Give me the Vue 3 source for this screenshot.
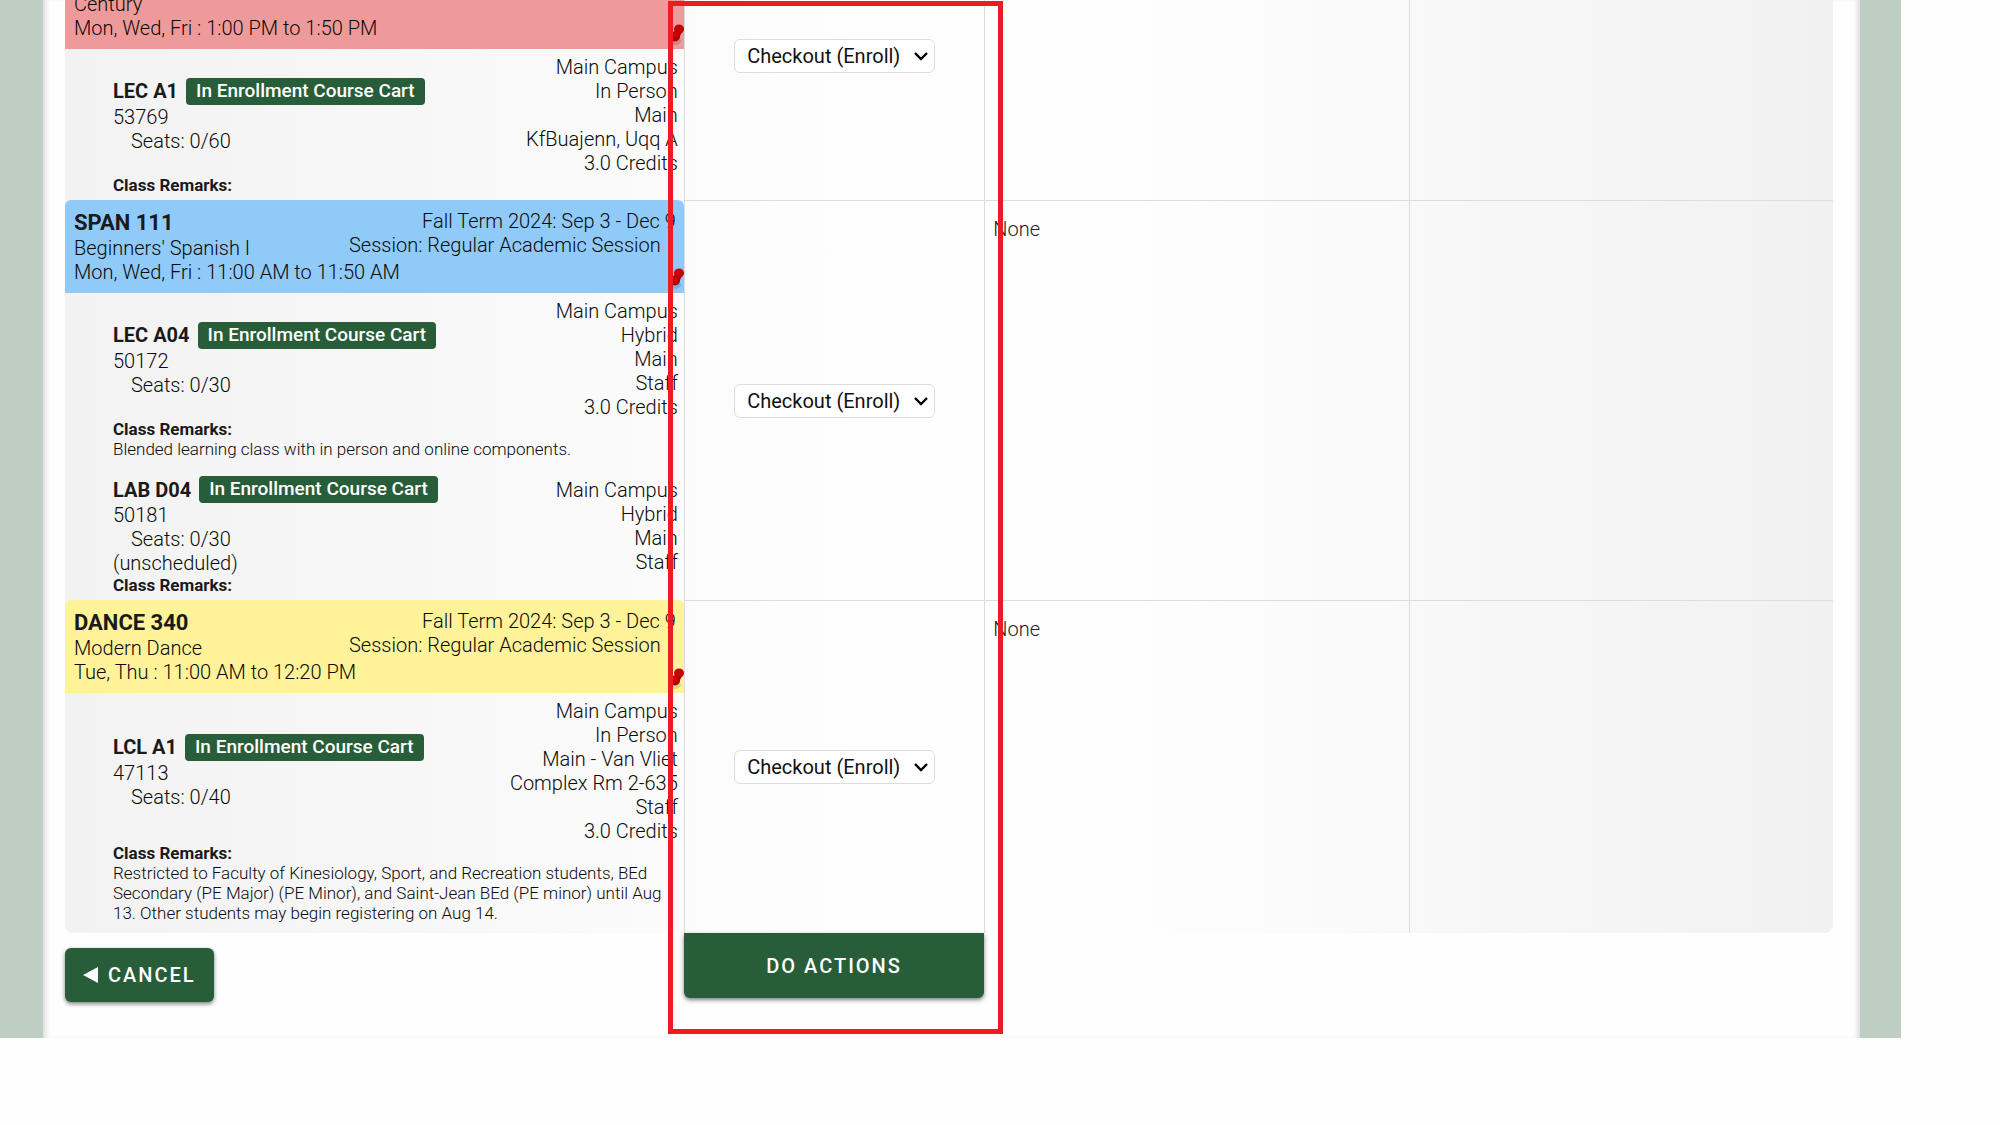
<script setup>
import { ref } from 'vue';

const term = 'Fall Term 2024: Sep 3 - Dec 9';
const session = 'Session: Regular Academic Session';

const courses = ref([
  {
    id: 'first',
    color: 'red',
    title: 'Century',
    times: 'Mon, Wed, Fri : 1:00 PM to 1:50 PM',
    action: 'enroll',
    sections: [
      {
        name: 'LEC A1',
        number: '53769',
        seats: '0/60',
        details: ['Main Campus', 'In Person', 'Main', 'KfBuajenn, Uqq A', '3.0 Credits'],
      },
    ],
  },
  {
    id: 'span111',
    color: 'blue',
    code: 'SPAN 111',
    title: "Beginners' Spanish I",
    times: 'Mon, Wed, Fri : 11:00 AM to 11:50 AM',
    action: 'enroll',
    messages: 'None',
    sections: [
      {
        name: 'LEC A04',
        number: '50172',
        seats: '0/30',
        details: ['Main Campus', 'Hybrid', 'Main', 'Staff', '3.0 Credits'],
        remarks: 'Blended learning class with in person and online components.',
      },
      {
        name: 'LAB D04',
        number: '50181',
        seats: '0/30',
        unscheduled: true,
        details: ['Main Campus', 'Hybrid', 'Main', 'Staff'],
      },
    ],
  },
  {
    id: 'dance340',
    color: 'yellow',
    code: 'DANCE 340',
    title: 'Modern Dance',
    times: 'Tue, Thu : 11:00 AM to 12:20 PM',
    action: 'enroll',
    messages: 'None',
    sections: [
      {
        name: 'LCL A1',
        number: '47113',
        seats: '0/40',
        details: ['Main Campus', 'In Person', 'Main - Van Vliet', 'Complex Rm 2-635', 'Staff', '3.0 Credits'],
        remarks:
          'Restricted to Faculty of Kinesiology, Sport, and Recreation students, BEd Secondary (PE Major) (PE Minor), and Saint-Jean BEd (PE minor) until Aug 13. Other students may begin registering on Aug 14.',
      },
    ],
  },
]);
</script>

<template>
  <div class="shell">
    <main class="page">
      <table class="cart-table">
        <colgroup>
          <col class="col-course" />
          <col class="col-action" />
          <col class="col-info" />
          <col class="col-info" />
        </colgroup>
        <tbody>
          <tr v-for="course in courses" :key="course.id">
            <td class="course-cell">
              <div class="course-header" :class="[course.color, { continued: !course.code }]">
                <div class="course-top">
                  <div>
                    <h2 v-if="course.code">{{ course.code }}</h2>
                    <div>{{ course.title }}</div>
                  </div>
                  <div v-if="course.code" class="term">
                    <div>{{ term }}</div>
                    <div class="session">{{ session }}</div>
                  </div>
                </div>
                <div>{{ course.times }}</div>
                <svg class="pin" width="16" height="24" viewBox="0 0 16 24" aria-hidden="true">
                  <ellipse cx="7" cy="18" rx="6" ry="4" fill="#000" opacity="0.12" />
                  <path d="M6 9 L9 5 L14 9 L11 15 Z" fill="#a80000" />
                  <ellipse cx="11" cy="6" rx="5" ry="4.5" fill="#c40000" />
                  <ellipse cx="7" cy="13.5" rx="5" ry="5" fill="#b30000" />
                  <ellipse cx="7" cy="12" rx="3" ry="2" fill="#d40000" />
                </svg>
              </div>
              <div v-for="section in course.sections" :key="section.name" class="section">
                <div class="section-body">
                  <div>
                    <div class="section-name">
                      <strong>{{ section.name }}</strong>
                      <span class="badge">In Enrollment Course Cart</span>
                    </div>
                    <div>{{ section.number }}</div>
                    <div class="seats">Seats: {{ section.seats }}</div>
                    <div v-if="section.unscheduled">(unscheduled)</div>
                  </div>
                  <div class="details">
                    <div v-for="line in section.details" :key="line">{{ line }}</div>
                  </div>
                </div>
                <div class="remarks">
                  <strong>Class Remarks:</strong>
                  <p v-if="section.remarks">{{ section.remarks }}</p>
                </div>
              </div>
            </td>
            <td class="action-cell">
              <div class="action-field">
                <select v-model="course.action" class="action-select" :aria-label="course.title">
                  <option value="enroll">Checkout (Enroll)</option>
                </select>
                <svg class="chevron" width="14" height="10" viewBox="0 0 14 10" aria-hidden="true">
                  <path d="M1 2 L7 8 L13 2" fill="none" stroke="#000" stroke-width="2.4" />
                </svg>
              </div>
            </td>
            <td class="info-cell">{{ course.messages }}</td>
            <td class="info-cell"></td>
          </tr>
        </tbody>
      </table>
      <div class="buttons">
        <button type="button" class="btn cancel">
          <svg width="15" height="16" viewBox="0 0 15 16" aria-hidden="true">
            <path d="M0 8 L15 0 V16 Z" fill="#fff" />
          </svg>
          CANCEL
        </button>
        <button type="button" class="btn do-actions">DO ACTIONS</button>
      </div>
      <div class="highlight"></div>
    </main>
  </div>
</template>

<style>
body {
  background: #fefefe;
}
</style>

<style scoped>
.shell {
  margin-right: 99px;
  padding: 0 41px 0 43px;
  background: #bfcec3;
  overflow: hidden;
  font-family: Roboto, "Liberation Sans", sans-serif;
  font-size: 20px;
  font-weight: 300;
  line-height: 24px;
  color: #0a0a0a;
}

.page {
  display: flow-root;
  position: relative;
  padding: 0 27px 36px 22px;
  background: #fefefe;
  box-shadow: inset 6px 0 5px -3px #ddd, inset -6px 0 5px -3px #ddd;
}

/* the list is scrolled past the first course heading */
.cart-table {
  width: 100%;
  margin-top: -88px;
  table-layout: fixed;
  border-collapse: separate;
  border-spacing: 0;
  background: linear-gradient(90deg, #f2f2f2, #fefefe 45%, #fefefe 60%, #f1f1f1);
  border-radius: 0 0 8px 8px;
}

.col-course {
  width: 35%;
}

.col-action {
  width: 17%;
}

.col-info {
  width: 24%;
}

td {
  padding: 0;
  border-left: 1px solid #ddd;
  vertical-align: top;
}

td.course-cell {
  border-left: none;
}

tr + tr td:not(.course-cell) {
  border-top: 1px solid #ddd;
}

.course-header {
  position: relative;
  padding: 9px 8px 9px 9px;
  border-radius: 6px 6px 0 0;
}

.course-header.continued {
  padding-top: 80px;
}

.course-top {
  display: flex;
  justify-content: space-between;
}

.red {
  background: #ef9a9a;
}

.blue {
  background: #90caf9;
}

.yellow {
  background: #fff399;
}

h2 {
  margin: 0;
  color: #1a1a1a;
  font-size: 22px;
  font-weight: 700;
  line-height: 27px;
}

.term {
  text-align: right;
}

.session {
  padding-right: 15px;
}

.pin {
  position: absolute;
  right: 0;
  bottom: 2px;
}

.section {
  padding: 6px 6px 5px 48px;
}

.section + .section {
  margin-top: 1px;
}

.section-body {
  display: flex;
  align-items: center;
  justify-content: space-between;
}

.section-name {
  display: flex;
  align-items: center;
  gap: 8px;
  height: 27px;
}

strong {
  color: #1a1a1a;
  font-weight: 700;
}

.badge {
  padding: 1px 10px 2px;
  border-radius: 4px;
  background: #275d38;
  color: #fff;
  font-size: 19px;
  font-weight: 500;
}

.seats {
  padding-left: 18px;
}

.details {
  text-align: right;
}

.remarks {
  font-size: 17px;
  line-height: 20px;
}

.remarks strong {
  display: block;
}

.remarks p {
  margin: 0 8px 5px 0;
}

.action-cell {
  vertical-align: middle;
}

.action-field {
  position: relative;
  width: 67%;
  margin: 0 auto;
}

.action-select {
  display: block;
  width: 100%;
  height: 34px;
  padding: 0 12px;
  border: 1px solid #ddd;
  border-radius: 6px;
  background: #fff;
  color: #111;
  font: inherit;
  font-weight: 400;
  appearance: none;
}

.chevron {
  position: absolute;
  top: 12px;
  right: 7px;
  pointer-events: none;
}

.info-cell {
  padding: 16px 8px;
  color: #222;
}

.buttons {
  display: grid;
  grid-template-columns: 35% 17%;
  align-items: start;
}

.btn {
  border: none;
  background: #275d38;
  color: #fff;
  font-family: inherit;
  font-size: 20px;
  font-weight: 500;
  line-height: 24px;
  letter-spacing: 2px;
  box-shadow: 0 2px 4px rgba(0, 0, 0, 0.5);
  cursor: pointer;
}

.cancel {
  display: flex;
  align-items: center;
  justify-self: start;
  gap: 10px;
  margin-top: 15px;
  padding: 15px 18px;
  border-radius: 6px;
}

.do-actions {
  height: 65px;
  border-radius: 0 0 6px 6px;
}

.highlight {
  position: absolute;
  top: 1px;
  bottom: 4px;
  left: calc(35% - 11px);
  width: calc(17% + 26px);
  box-sizing: border-box;
  border: 5px solid #ed1c24;
  pointer-events: none;
}
</style>
